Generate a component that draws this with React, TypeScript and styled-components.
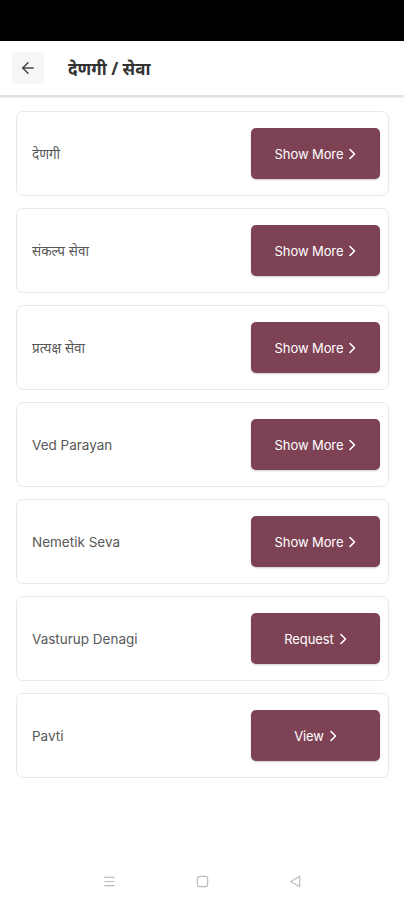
import React from "react";
import styled, { createGlobalStyle } from "styled-components";

const Global = createGlobalStyle`
  html, body { margin: 0; padding: 0; background: #ffffff; }
  body { font-family: "Open Sans", "Noto Sans", sans-serif; }
  * { box-sizing: border-box; }
`;

const Screen = styled.div`
  width: 404px;
  height: 900px;
  display: flex;
  flex-direction: column;
  background: #ffffff;
  overflow: hidden;
`;

const StatusBar = styled.div`
  height: 41px;
  background: #000000;
  flex-shrink: 0;
`;

const Header = styled.header`
  height: 55px;
  display: flex;
  align-items: center;
  gap: 24px;
  padding: 0 12px;
  background: #ffffff;
  box-shadow: 0 1px 2px rgba(0, 0, 0, 0.18);
  border-bottom: 1px solid #e2e2e2;
  flex-shrink: 0;
`;

const BackButton = styled.button`
  width: 32px;
  height: 32px;
  border: none;
  border-radius: 6px;
  background: #f6f6f6;
  display: flex;
  align-items: center;
  justify-content: center;
  padding: 0;
  color: #444;
`;

const Title = styled.h1`
  margin: 0;
  font-family: "Noto Sans", "Open Sans", sans-serif;
  font-size: 17px;
  font-weight: 700;
  color: #333;
`;

const List = styled.main`
  flex: 1;
  display: flex;
  flex-direction: column;
  gap: 12px;
  padding: 15px 15px 0 16px;
`;

const Card = styled.div`
  height: 85px;
  display: flex;
  align-items: center;
  justify-content: space-between;
  padding: 0 8px 0 15px;
  border: 1px solid #e9e9e9;
  border-radius: 7px;
  background: #fff;
`;

const Label = styled.span`
  font-family: "Inter", "Noto Sans", sans-serif;
  font-size: 13.5px;
  color: #585858;
`;

const ActionButton = styled.button`
  width: 129px;
  height: 51px;
  border: none;
  border-radius: 5px;
  background: #7e4255;
  color: #fff;
  font-family: "Inter", sans-serif;
  font-size: 13px;
  font-weight: 400;
  letter-spacing: -0.1px;
  display: flex;
  align-items: center;
  justify-content: center;
  gap: 5px;
  box-shadow: 0 1px 2px rgba(0, 0, 0, 0.2);
  padding: 0;
`;

const NavBar = styled.nav`
  height: 60px;
  display: flex;
  align-items: center;
  justify-content: center;
  gap: 78px;
  padding-top: 22px;
  flex-shrink: 0;
`;

const NavIcon = styled.svg`
  width: 15px;
  height: 15px;
  color: #bdbdbd;
`;

const Chevron = () => (
  <svg width="8" height="12" viewBox="0 0 8 12" fill="none">
    <path d="M2 1.5 L6.5 6 L2 10.5" stroke="#fff" strokeWidth="1.6" strokeLinecap="round" strokeLinejoin="round" />
  </svg>
);

const items = [
  { label: "देणगी", action: "Show More" },
  { label: "संकल्प सेवा", action: "Show More" },
  { label: "प्रत्यक्ष सेवा", action: "Show More" },
  { label: "Ved Parayan", action: "Show More" },
  { label: "Nemetik Seva", action: "Show More" },
  { label: "Vasturup Denagi", action: "Request" },
  { label: "Pavti", action: "View" },
];

export default function App() {
  return (
    <Screen>
      <Global />
      <StatusBar />
      <Header>
        <BackButton aria-label="back">
          <svg width="18" height="18" viewBox="0 0 24 24" fill="none" stroke="#444" strokeWidth="2" strokeLinecap="round" strokeLinejoin="round">
            <path d="M19 12H5" />
            <path d="M12 19l-7-7 7-7" />
          </svg>
        </BackButton>
        <Title>देणगी / सेवा</Title>
      </Header>
      <List>
        {items.map((it) => (
          <Card key={it.label}>
            <Label>{it.label}</Label>
            <ActionButton>
              {it.action}
              <Chevron />
            </ActionButton>
          </Card>
        ))}
      </List>
      <NavBar>
        <NavIcon viewBox="0 0 16 16" fill="none" stroke="currentColor" strokeWidth="1.3">
          <path d="M2.5 3.5h11M2.5 8h11M2.5 12.5h11" />
        </NavIcon>
        <NavIcon viewBox="0 0 16 16" fill="none" stroke="currentColor" strokeWidth="1.3">
          <rect x="2.5" y="2.5" width="11" height="11" rx="2.5" />
        </NavIcon>
        <NavIcon viewBox="0 0 16 16" fill="none" stroke="currentColor" strokeWidth="1.3" strokeLinejoin="round">
          <path d="M12.5 2.5 L3 8 L12.5 13.5 Z" />
        </NavIcon>
      </NavBar>
    </Screen>
  );
}
